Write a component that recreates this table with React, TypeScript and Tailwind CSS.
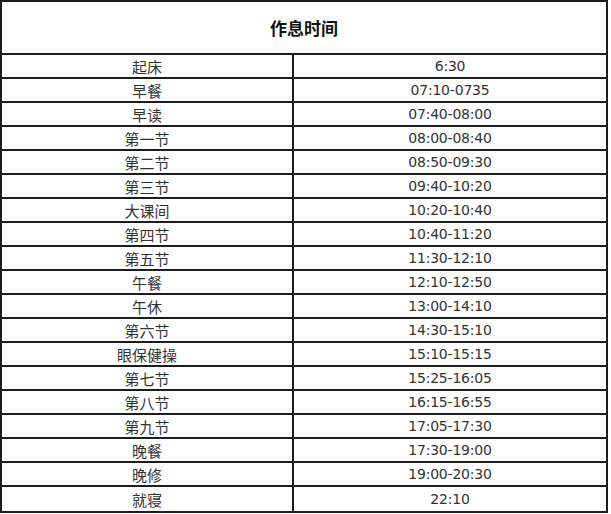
import React from 'react';

interface ScheduleRow {
  name: string;
  time: string;
}

const rows: ScheduleRow[] = [
  { name: '起床', time: '6:30' },
  { name: '早餐', time: '07:10-0735' },
  { name: '早读', time: '07:40-08:00' },
  { name: '第一节', time: '08:00-08:40' },
  { name: '第二节', time: '08:50-09:30' },
  { name: '第三节', time: '09:40-10:20' },
  { name: '大课间', time: '10:20-10:40' },
  { name: '第四节', time: '10:40-11:20' },
  { name: '第五节', time: '11:30-12:10' },
  { name: '午餐', time: '12:10-12:50' },
  { name: '午休', time: '13:00-14:10' },
  { name: '第六节', time: '14:30-15:10' },
  { name: '眼保健操', time: '15:10-15:15' },
  { name: '第七节', time: '15:25-16:05' },
  { name: '第八节', time: '16:15-16:55' },
  { name: '第九节', time: '17:05-17:30' },
  { name: '晚餐', time: '17:30-19:00' },
  { name: '晚修', time: '19:00-20:30' },
  { name: '就寝', time: '22:10' },
];

export default function App() {
  return (
    <div className="bg-white w-[611px] h-[514px] overflow-hidden">
      <div className="w-[608px] border-2 border-[#1c1c1c] text-[#333] font-['DejaVu_Sans','Noto_Sans_CJK_SC',sans-serif]">
        {/* title row */}
        <div className="h-[53px] border-b-2 border-[#1c1c1c] flex items-center justify-center">
          <span className="text-[17px] font-bold text-[#111] font-['Noto_Sans_CJK_SC',sans-serif]">作息时间</span>
        </div>

        {rows.map((row, i) => (
          <div
            key={i}
            className={`flex h-[24px] ${i < rows.length - 1 ? 'border-b-2 border-[#1c1c1c]' : ''}`}
          >
            <div className="w-[292px] border-r-2 border-[#1c1c1c] flex items-center justify-center text-[15px] leading-none font-['Noto_Sans_CJK_SC',sans-serif]">
              {row.name}
            </div>
            <div className="flex-1 flex items-center justify-center text-[14px] leading-none tracking-[-0.2px]">
              {row.time}
            </div>
          </div>
        ))}
      </div>
    </div>
  );
}
